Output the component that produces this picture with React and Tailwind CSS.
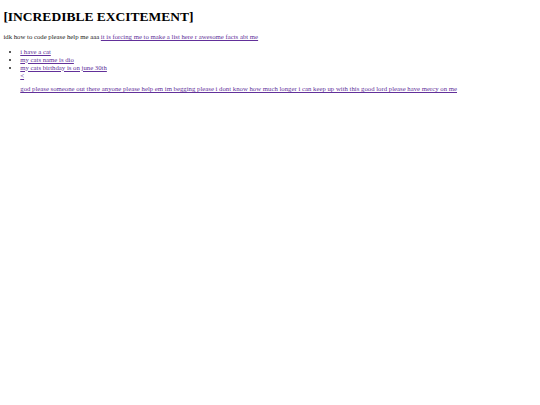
import React from "react";

// Bare unstyled page, shown at the browser's default styles (scaled ~0.42).
const link = "text-[#62309a] underline";

export default function App() {
  return (
    <div className="min-h-screen bg-white p-[3.375px] text-[#222] text-[6.75px] leading-[7.95px] [font-family:'Liberation_Serif','Times_New_Roman',serif]">
      <h1 className="text-[13.5px] text-black font-bold leading-[normal] mt-[5.7px] mb-[8.1px]">
        [INCREDIBLE EXCITEMENT]
      </h1>
      <p className="my-[6.75px]">
        idk how to code please help me aaa{" "}
        <a href="#" className={link}>
          it is forcing me to make a list here r awesome facts abt me
        </a>
      </p>
      <ul className="list-disc pl-[16.875px] my-[6.75px]">
        <li>
          <a href="#" className={link}>i have a cat</a>
        </li>
        <li>
          <a href="#" className={link}>my cats name is dio</a>
        </li>
        <li>
          <a href="#" className={link}>my cats birthday is on june 30th</a>
          <br />
          <a href="#" className={link}>&lt;</a>
          <p className="mt-[5.6px] mb-[6.75px]">
            <a href="#" className={link}>
              god please someone out there anyone please help em im begging please i dont know how much longer i can keep up with this good lord please have mercy on me
            </a>
          </p>
        </li>
      </ul>
    </div>
  );
}
